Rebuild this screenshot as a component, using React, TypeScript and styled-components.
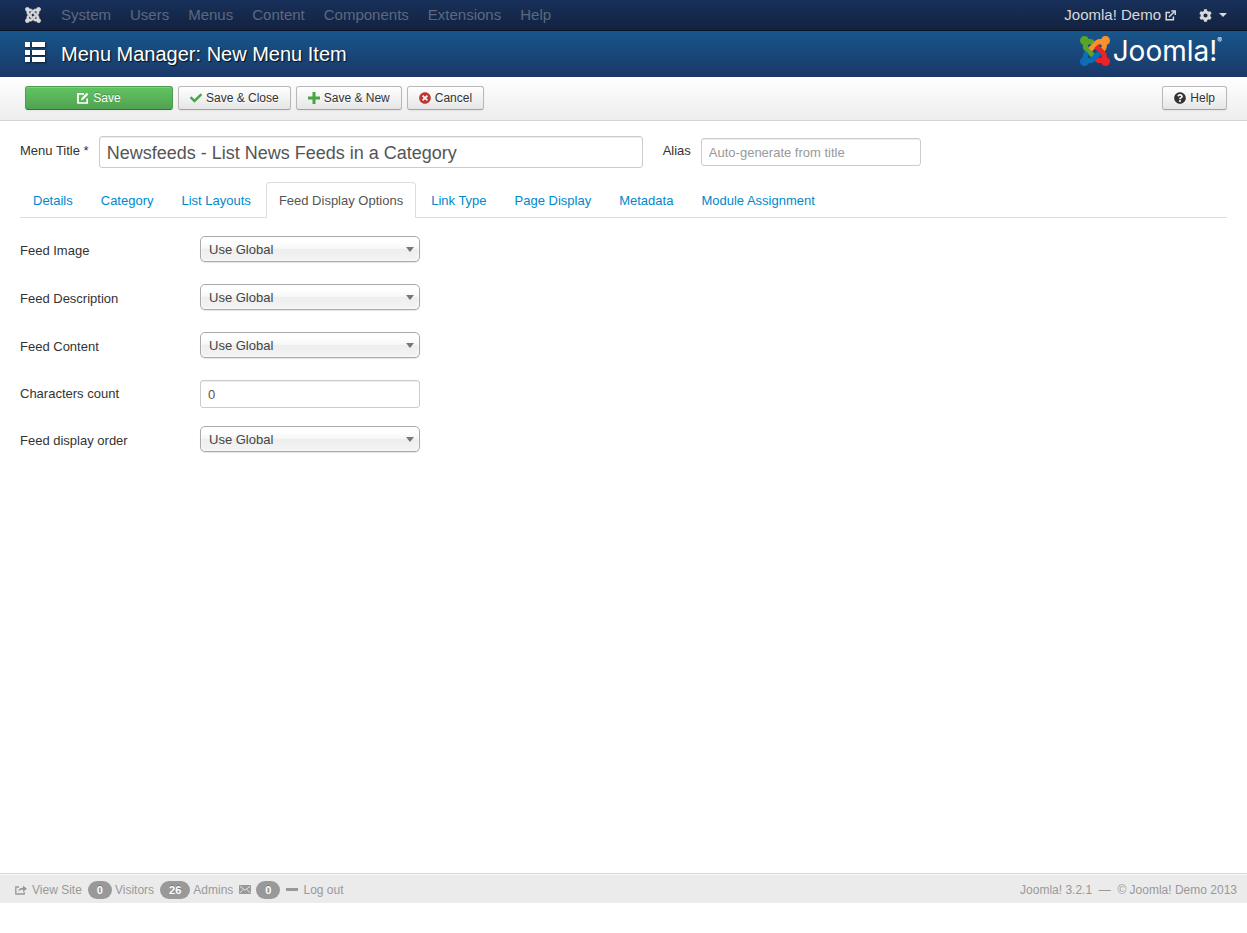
import React from "react";
import styled, { createGlobalStyle } from "styled-components";
import { FaCheck, FaPlus, FaTimesCircle, FaQuestionCircle, FaCog } from "react-icons/fa";

const GlobalStyle = createGlobalStyle`
  * { box-sizing: border-box; }
  body {
    margin: 0;
    background: #fff;
    color: #333;
    font: 13px/18px "Liberation Sans", Arial, sans-serif;
  }
  button, input, select { font-family: inherit; margin: 0; }
  a { text-decoration: none; }
`;

const Page = styled.div`
  display: flex;
  flex-direction: column;
  min-height: calc(100vh - 30px);
`;

const TopBar = styled.nav`
  display: flex;
  align-items: center;
  height: 31px;
  padding: 0 20px 0 25px;
  background: linear-gradient(#17305a, #132240);
  border-bottom: 1px solid #0b1426;
`;

const HomeLink = styled.a`
  display: flex;
  color: #d9d9d9;
  margin-right: 20px;
`;

const NavList = styled.ul`
  display: flex;
  gap: 19px;
  margin: 0;
  padding: 0;
  list-style: none;
`;

const NavLink = styled.a`
  font-size: 15px;
  line-height: 20px;
  color: #5d6880;
`;

const TopRight = styled.div`
  display: flex;
  align-items: center;
  gap: 23px;
  margin-left: auto;
`;

const SiteLink = styled.a`
  display: flex;
  align-items: center;
  gap: 4px;
  font-size: 15px;
  line-height: 20px;
  color: #d9d9d9;
`;

const SettingsButton = styled.button`
  display: flex;
  align-items: center;
  gap: 7px;
  padding: 0;
  border: 0;
  background: none;
  color: #d9d9d9;
`;

const Caret = styled.span`
  border: 4px solid transparent;
  border-top-color: currentColor;
  border-bottom: 0;
`;

const Header = styled.header`
  display: flex;
  align-items: center;
  justify-content: space-between;
  height: 46px;
  padding: 0 25px;
  background: linear-gradient(#17568c, #1a3867);
  color: #fff;
`;

const Title = styled.h1`
  display: flex;
  align-items: center;
  gap: 16px;
  margin: 0;
  font-size: 20px;
  font-weight: 400;
  line-height: 36px;
  text-shadow: 1px 1px 1px rgba(0, 0, 0, 0.8);

  svg { filter: drop-shadow(1px 1px 1px rgba(0, 0, 0, 0.6)); margin-bottom: 4px; }
`;

const Brand = styled.div`
  display: flex;
  align-items: center;
  gap: 3px;
  padding-bottom: 6px;
  font: 28px/32px Inter, sans-serif;

  sup { align-self: flex-start; font-size: 7px; line-height: 12px; margin-left: -3px; }
`;

const Toolbar = styled.div`
  display: flex;
  gap: 5px;
  height: 44px;
  padding: 9px 20px 0 25px;
  background: linear-gradient(#fff, #ededed);
  border-bottom: 1px solid #d3d3d3;
`;

const ToolButton = styled.button<{ $primary?: boolean; $end?: boolean }>`
  display: flex;
  align-items: center;
  justify-content: center;
  gap: 4px;
  height: 24px;
  min-width: ${(p) => (p.$primary ? "148px" : "0")};
  margin-left: ${(p) => (p.$end ? "auto" : "0")};
  padding: 0 11px;
  border: 1px solid ${(p) => (p.$primary ? "#4a9f4a" : "#b8b8b8")};
  border-bottom-color: ${(p) => (p.$primary ? "#387038" : "#a2a2a2")};
  border-radius: 3px;
  background: ${(p) => (p.$primary ? "linear-gradient(#62c462, #51a351)" : "linear-gradient(#fff, #e6e6e6)")};
  box-shadow: inset 0 1px 0 rgba(255, 255, 255, 0.2), 0 1px 2px rgba(0, 0, 0, 0.05);
  color: ${(p) => (p.$primary ? "#fff" : "#333")};
  text-shadow: ${(p) => (p.$primary ? "0 -1px 0 rgba(0, 0, 0, 0.25)" : "0 1px 1px rgba(255, 255, 255, 0.75)")};
  font-size: 12px;
  line-height: 18px;
`;

const Main = styled.main`
  flex: 1;
  padding: 15px 20px;
`;

const TitleRow = styled.div`
  display: flex;
  align-items: center;
  margin-bottom: 14px;
`;

const TitleLabel = styled.label`
  margin: 0 10px 2px 0;
`;

const TextInput = styled.input<{ $large?: boolean }>`
  width: ${(p) => (p.$large ? "544px" : "220px")};
  height: ${(p) => (p.$large ? "32px" : "28px")};
  margin-right: ${(p) => (p.$large ? "20px" : "0")};
  padding: ${(p) => (p.$large ? "2px" : "0")} 7px 0;
  border: 1px solid #ccc;
  border-radius: 3px;
  background: #fff;
  box-shadow: inset 0 1px 1px rgba(0, 0, 0, 0.075);
  color: #555;
  font-size: ${(p) => (p.$large ? "18px" : "13px")};
  &::placeholder { color: #999; opacity: 1; }
`;

const Tabs = styled.div`
  display: flex;
  gap: 2px;
  margin-bottom: 18px;
  border-bottom: 1px solid #ddd;
`;

const Tab = styled.button<{ $active: boolean }>`
  height: 36px;
  margin-bottom: -1px;
  padding: 2px 12px 0;
  border: 1px solid ${(p) => (p.$active ? "#ddd" : "transparent")};
  border-bottom-color: ${(p) => (p.$active ? "#fff" : "transparent")};
  border-radius: 4px 4px 0 0;
  background: ${(p) => (p.$active ? "#fff" : "none")};
  color: ${(p) => (p.$active ? "#555" : "#08c")};
  font-size: 13px;
  line-height: 18px;
`;

const Fields = styled.form`
  display: grid;
  gap: 18px;
`;

const Field = styled.div`
  display: grid;
  grid-template-columns: 180px 220px;
  align-items: center;
`;

const SelectBox = styled.div`
  display: grid;
  align-items: center;
  padding-bottom: 4px;

  &::after {
    content: "";
    grid-area: 1 / 1;
    justify-self: end;
    margin-right: 6px;
    border: 4px solid transparent;
    border-top: 5px solid #777;
    border-bottom: 0;
    pointer-events: none;
  }
`;

const Select = styled.select`
  grid-area: 1 / 1;
  appearance: none;
  width: 100%;
  height: 26px;
  padding: 0 8px;
  border: 1px solid #aaa;
  border-radius: 5px;
  background: linear-gradient(#fff 20%, #f6f6f6 50%, #eee 52%, #f4f4f4 100%);
  box-shadow: inset 0 0 3px #fff, 0 1px 1px rgba(0, 0, 0, 0.1);
  color: #444;
  font-size: 13px;
`;

const Footer = styled.footer`
  display: flex;
  align-items: center;
  justify-content: space-between;
  height: 30px;
  padding: 2px 10px 0 15px;
  border-top: 1px solid #d4d4d4;
  box-shadow: inset 0 1px 0 #fafafa;
  background: #ebebeb;
  color: #999;
  font-size: 12px;
`;

const Status = styled.div`
  display: flex;
  align-items: center;
  gap: 6px;
`;

const StatusItem = styled.span`
  display: flex;
  align-items: center;
  gap: 3px;
`;

const StatusLink = styled.a`
  display: flex;
  align-items: center;
  gap: 5px;
  color: inherit;
`;

const Badge = styled.span`
  padding: 0 9px;
  border-radius: 9px;
  background: #999;
  color: #fff;
  font-size: 11px;
  font-weight: 700;
  line-height: 18px;
  text-shadow: 0 -1px 0 rgba(0, 0, 0, 0.25);
`;

const arms = [
  "M.6 92.1C.6 58.8 27.4 32 60.4 32c30 0 54.5 21.9 59.2 50.2 32.6-7.6 67.1.6 96.5 30l-44.3 44.3c-20.5-20.5-42.6-16.3-55.4-3.5-14.3 14.3-14.3 37.9 0 52.2l99.5 99.5-44 44.3c-87.7-87.2-49.7-49.7-99.8-99.7-26.8-26.5-35-64.8-24.8-98.9C20.4 144.6.6 120.7.6 92.1z",
  "M130.1 208.5l44.3 44.3c10-10 89.7-89.7 99.7-99.8 14.3-14.3 37.6-14.3 51.9 0 12.8 12.8 17 35-3.5 55.4l44 44.3c31.2-31.2 38.5-67.6 28.9-101.2 29.2-4.1 51.9-29.2 51.9-59.5 0-33.2-26.8-60.1-59.8-60.1-30.3 0-55.4 22.5-59.5 51.6-33.8-9.9-71.7-1.5-98.3 25.1-18.3 19.1-71.1 71.5-99.6 99.9z",
  "M396.4 360.7c8.2-32.7-.9-68.5-26.3-93.9-11.8-12.2 5 4.7-99.5-99.7l-44.3 44.3 99.7 99.7c14.3 14.3 14.3 37.6 0 51.9-12.8 12.8-35 17-55.4-3.5l-44 44.3c27.6 30.2 68 38.8 102.7 28 5.5 27.4 29.7 48.1 58.9 48.1 33 0 59.8-26.8 59.8-60.1 0-30.2-22.5-55-51.6-59.1z",
  "M312.1 307.6l-44-44.3c-87 86.4-50.4 50.4-99.7 99.8-14.3 14.3-37.6 14.3-51.9 0-13.1-13.4-16.9-35.3 3.2-55.4l-44-44.3c-30.2 30.2-38 65.2-29.5 98.3-26.7 6-46.2 29.9-46.2 58.2C0 453.2 26.8 480 59.8 480c28.6 0 52.5-19.8 58.6-46.7 32.7 8.2 68.5-.6 94.2-26 32.1-32 12.2-12.4 99.5-99.7z",
];

const JoomlaMark = ({ size, colors }: { size: number; colors: string[] }) => (
  <svg width={size} height={size} viewBox="-8 24 464 464" aria-hidden="true">
    {arms.map((d, i) => {
      const color = colors[i % colors.length];
      return <path key={i} d={d} fill={color} stroke={color} strokeWidth="16" />;
    })}
  </svg>
);

const ListIcon = () => (
  <svg width="20" height="20" viewBox="0 0 20 20" fill="#fff" aria-hidden="true">
    <path d="M0 0h5v5H0zM7 0h13v5H7zM0 8h5v5H0zM7 8h13v5H7zM0 15h5v5H0zM7 15h13v5H7z" />
  </svg>
);

const EditIcon = () => (
  <svg width="12" height="12" viewBox="0 0 12 12" fill="none" stroke="#fff" aria-hidden="true">
    <path d="M7 1.8H1V11h9.2V6.5" strokeWidth="1.7" />
    <path d="M4 8.4l.6-2.5L9.7.8l1.7 1.7-5.1 5.1z" fill="#fff" stroke="none" />
  </svg>
);

const PlusIcon = () => (
  <svg width="12" height="12" viewBox="0 0 12 12" fill="#46a546" aria-hidden="true">
    <path d="M4.5 0h3v4.5H12v3H7.5V12h-3V7.5H0v-3h4.5z" />
  </svg>
);

const ExternalIcon = () => (
  <svg width="11" height="11" viewBox="0 0 11 11" fill="none" stroke="currentColor" strokeWidth="1.5" aria-hidden="true">
    <path d="M5 2.5H1.2v7.2h7.2V6.5M4 7l5-5M6.3 1h3.9v3.9" />
  </svg>
);

const ShareIcon = () => (
  <svg width="12" height="10" viewBox="0 0 12 10" fill="none" stroke="currentColor" aria-hidden="true">
    <path d="M4 2H.8v7h8.4V7" strokeWidth="1.3" />
    <path d="M3.2 7C3.5 4.3 5 2.8 8 2.8V.5l4 3.2L8 7V4.8c-2 0-3.5.4-4.8 2.2z" fill="currentColor" stroke="none" />
  </svg>
);

const MailIcon = () => (
  <svg width="12" height="9" viewBox="0 0 12 9" aria-hidden="true">
    <path d="M0 0h12v9H0z" fill="currentColor" />
    <path d="M.8 1.2L6 5.2l5.2-4M.8 8l3.4-3.6M11.2 8L7.8 4.4" fill="none" stroke="#ebebeb" strokeWidth=".9" />
  </svg>
);

const MinusIcon = () => (
  <svg width="12" height="3" viewBox="0 0 12 3" fill="currentColor" aria-hidden="true">
    <path d="M0 0h12v3H0z" />
  </svg>
);

const menus = ["System", "Users", "Menus", "Content", "Components", "Extensions", "Help"];
const tabs = [
  "Details",
  "Category",
  "List Layouts",
  "Feed Display Options",
  "Link Type",
  "Page Display",
  "Metadata",
  "Module Assignment",
];
const fields = [
  { id: "image", label: "Feed Image" },
  { id: "description", label: "Feed Description" },
  { id: "content", label: "Feed Content" },
  { id: "characters", label: "Characters count", value: "0" },
  { id: "order", label: "Feed display order" },
];

export default function App() {
  const [active, setActive] = React.useState("Feed Display Options");
  return (
    <>
      <GlobalStyle />
      <Page>
        <TopBar>
          <HomeLink href="#" aria-label="Control panel">
            <JoomlaMark size={16} colors={["#d9d9d9"]} />
          </HomeLink>
          <NavList>
            {menus.map((m) => (
              <li key={m}>
                <NavLink href="#">{m}</NavLink>
              </li>
            ))}
          </NavList>
          <TopRight>
            <SiteLink href="#">
              Joomla! Demo <ExternalIcon />
            </SiteLink>
            <SettingsButton aria-label="Settings">
              <FaCog size={13} />
              <Caret />
            </SettingsButton>
          </TopRight>
        </TopBar>
        <Header>
          <Title>
            <ListIcon />
            Menu Manager: New Menu Item
          </Title>
          <Brand>
            <JoomlaMark size={30} colors={["#5aa426", "#f9912c", "#ea2428", "#0f6db5"]} />
            <span>Joomla!</span>
            <sup>®</sup>
          </Brand>
        </Header>
        <Toolbar>
          <ToolButton $primary>
            <EditIcon />
            Save
          </ToolButton>
          <ToolButton>
            <FaCheck size={12} color="#46a546" />
            Save &amp; Close
          </ToolButton>
          <ToolButton>
            <PlusIcon />
            Save &amp; New
          </ToolButton>
          <ToolButton>
            <FaTimesCircle size={12} color="#bd362f" />
            Cancel
          </ToolButton>
          <ToolButton $end>
            <FaQuestionCircle size={12} />
            Help
          </ToolButton>
        </Toolbar>
        <Main>
          <TitleRow>
            <TitleLabel htmlFor="title">Menu Title *</TitleLabel>
            <TextInput id="title" $large defaultValue="Newsfeeds - List News Feeds in a Category" />
            <TitleLabel htmlFor="alias">Alias</TitleLabel>
            <TextInput id="alias" placeholder="Auto-generate from title" />
          </TitleRow>
          <Tabs role="tablist">
            {tabs.map((t) => (
              <Tab key={t} role="tab" aria-selected={t === active} $active={t === active} onClick={() => setActive(t)}>
                {t}
              </Tab>
            ))}
          </Tabs>
          <Fields>
            {fields.map((f) => (
              <Field key={f.id}>
                <label htmlFor={f.id}>{f.label}</label>
                {f.value ? (
                  <TextInput id={f.id} defaultValue={f.value} />
                ) : (
                  <SelectBox>
                    <Select id={f.id}>
                      <option>Use Global</option>
                      <option>Hide</option>
                      <option>Show</option>
                    </Select>
                  </SelectBox>
                )}
              </Field>
            ))}
          </Fields>
        </Main>
        <Footer>
          <Status>
            <StatusLink href="#">
              <ShareIcon />
              View Site
            </StatusLink>
            <StatusItem>
              <Badge>0</Badge>
              Visitors
            </StatusItem>
            <StatusItem>
              <Badge>26</Badge>
              Admins
            </StatusItem>
            <StatusLink href="#" aria-label="Messages">
              <MailIcon />
              <Badge>0</Badge>
            </StatusLink>
            <StatusLink href="#">
              <MinusIcon />
              Log out
            </StatusLink>
          </Status>
          <span>Joomla! 3.2.1 &nbsp;—&nbsp; © Joomla! Demo 2013</span>
        </Footer>
      </Page>
    </>
  );
}
